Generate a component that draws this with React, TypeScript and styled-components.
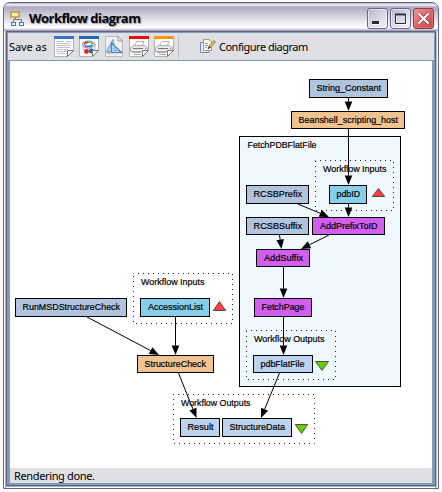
import React from "react";
import styled, { createGlobalStyle } from "styled-components";

const GlobalStyle = createGlobalStyle`
  * { box-sizing: border-box; }
  body { margin: 0; background: #fff; color: #000; }
`;

const Screen = styled.div`
  width: 442px;
  height: 492px;
  padding: 2px 3px 3px;
  background: #fff;
  overflow: hidden;
`;

const WindowFrame = styled.div`
  height: 487px;
  border: 1px solid #656484;
  border-radius: 7px 7px 0 0;
  display: flex;
  flex-direction: column;
  background: linear-gradient(to right, #fff 1px, #aaaabb 1px, #aaaabb 2px, transparent 2px),
    linear-gradient(to left, #fff 1px, #b9b8c9 1px, #b9b8c9 3px, transparent 3px),
    linear-gradient(to top, #fff 1px, #aaaabd 1px);
  padding: 0 2px 3px 2px;
  overflow: hidden;
`;

const TitleBar = styled.header`
  flex: 0 0 28px;
  margin: 0 -2px;
  padding: 5px 4px 2px 6px;
  display: flex;
  align-items: center;
  gap: 2px;
  background: linear-gradient(#aaa9c0 0, #d7d6e3 1px, #f4f3fa 2px, #aaa9be 4px, #b9b8ca 7px,
    #d2d1de 13px, #f1f1f5 21px, #ffffff 25px, #dddde5 26px, #8f8ea8 28px);
`;

const Title = styled.h1`
  margin: -2px 0 0 2px;
  flex: 1;
  font: bold 13px/18px "Open Sans", "Noto Sans", sans-serif;
  letter-spacing: -0.54px;
  white-space: nowrap;
  text-shadow: 1px 1px 1px #9998aa;
`;

const WindowButton = styled.button<{ $close?: boolean }>`
  width: 21px;
  height: 21px;
  padding: 0;
  display: grid;
  place-items: center;
  border: 1px solid ${(p) => (p.$close ? "#963843" : "#67668b")};
  border-radius: 3px;
  background: ${(p) =>
    p.$close
      ? "linear-gradient(135deg, #ef9a96, #df6b6b 45%, #c44750)"
      : "linear-gradient(145deg, #b7b6cb, #d8d7e4 50%, #f4f4f8)"};
  box-shadow: inset 0 0 0 1px ${(p) => (p.$close ? "#ed8e8a66" : "#ffffff88")};
`;

const Client = styled.main`
  flex: 1;
  display: flex;
  flex-direction: column;
  border: 1px solid #626181;
`;

const Bevel = styled.div`
  flex: 1;
  display: flex;
  flex-direction: column;
  border: solid #7e9db9;
  border-width: 1px 3px 2px;
`;

const Toolbar = styled.div`
  flex: 0 0 28px;
  display: flex;
  align-items: center;
  margin: 0 -2px;
  padding: 0 2px 0 1px;
  background: #e0dfe4;
  border-bottom: 1px solid #7e9db9;
`;

const UiText = styled.span<{ $width: number; $spacing: number }>`
  width: ${(p) => p.$width}px;
  font: 11px/15px "Noto Sans", "Open Sans", sans-serif;
  letter-spacing: ${(p) => p.$spacing}px;
  white-space: nowrap;
`;

const SaveButtons = styled.div`
  display: flex;
  gap: 5px;
  padding-right: 4px;
  border-right: 1px solid #c1c1c8;
  height: 22px;
  align-items: center;
`;

const ConfigureButton = styled.div`
  display: flex;
  align-items: center;
  gap: 3px;
  margin-left: 21px;
`;

const Glyph = styled.svg`
  display: block;
  flex: none;
`;

const Canvas = styled.section`
  flex: 1;
  background: #fff;
  overflow: hidden;
`;

const Diagram = styled.svg`
  display: block;
`;

const NodeBox = styled.rect`
  stroke: #000;
  stroke-width: 1;
`;

const GroupBox = styled.rect`
  fill: none;
  stroke: #222;
  stroke-width: 1;
  stroke-dasharray: 1 4;
  stroke-dashoffset: 0.5;
`;

const Label = styled.text`
  font: 9.4px "Liberation Sans", Arial, sans-serif;
  fill: #000;
  stroke: #000;
  stroke-width: 0.2px;
`;

const Edge = styled.path`
  fill: none;
  stroke: #000;
  stroke-width: 1;
`;

const StatusBar = styled.footer`
  flex: 0 0 14px;
  padding-left: 4px;
  display: flex;
  align-items: center;
  background: #e0dfe4;
`;

const palette = {
  constant: "#b0c4de",
  script: "#f0c390",
  input: "#87ceeb",
  local: "#d15fee",
  output: "#bcd2ee",
};

type Kind = keyof typeof palette;
interface GraphNode {
  name: string;
  kind: Kind;
  box: [number, number, number, number];
  text: [number, number];
}

const nodes: GraphNode[] = [
  { name: "String_Constant", kind: "constant", box: [309, 79, 79, 19], text: [316.5, 64.5] },
  { name: "Beanshell_scripting_host", kind: "script", box: [291, 111, 114, 18], text: [298.5, 99.5] },
  { name: "RCSBPrefix", kind: "constant", box: [246, 185, 63, 19], text: [253.5, 48.5] },
  { name: "pdbID", kind: "input", box: [329, 185, 38, 19], text: [336.5, 23.5] },
  { name: "RCSBSuffix", kind: "constant", box: [246, 217, 63, 18], text: [253.5, 48.5] },
  { name: "AddPrefixToID", kind: "local", box: [312, 217, 73, 18], text: [320, 57.5] },
  { name: "AddSuffix", kind: "local", box: [256, 249, 54, 18], text: [264, 39] },
  { name: "FetchPage", kind: "local", box: [254, 298, 58, 19], text: [261.5, 43] },
  { name: "pdbFlatFile", kind: "output", box: [253, 355, 60, 18], text: [260.5, 44] },
  { name: "RunMSDStructureCheck", kind: "constant", box: [15, 298, 112, 19], text: [22.5, 97.5] },
  { name: "AccessionList", kind: "input", box: [140, 298, 70, 19], text: [148, 55] },
  { name: "StructureCheck", kind: "script", box: [137, 355, 77, 18], text: [144.5, 61.5] },
  { name: "Result", kind: "output", box: [180, 418, 40, 19], text: [187.5, 26] },
  { name: "StructureData", kind: "output", box: [222, 418, 70, 19], text: [229.5, 55.5] },
];

const groups = [
  { name: "Workflow Inputs", box: [315, 160, 79, 51], x: 323, y: 172, width: 63.5 },
  { name: "Workflow Outputs", box: [246, 330, 90, 50], x: 254, y: 342, width: 70.5 },
  { name: "Workflow Inputs", box: [133, 273, 100, 51], x: 141, y: 285, width: 63.5 },
  { name: "Workflow Outputs", box: [173, 394, 142, 50], x: 181, y: 406, width: 69.5 },
];

/* Each edge runs from its source to the tip of its arrow head. */
const edges: [number, number, number, number][] = [
  [348.5, 98, 348.5, 111],
  [348.5, 129, 348.5, 185],
  [298, 204, 329, 217],
  [348.5, 204, 348.5, 217],
  [279.5, 235, 281.5, 249],
  [329, 235, 301, 249],
  [283.5, 267, 283.5, 298],
  [283.5, 317, 283.5, 355],
  [87, 317, 159, 355],
  [175.5, 317, 175.5, 355],
  [178.5, 373, 196.5, 418],
  [279.5, 373, 261, 418],
];

const Arrow = ({ line: [x1, y1, x2, y2] }: { line: [number, number, number, number] }) => {
  const angle = Math.atan2(y2 - y1, x2 - x1);
  const dx = Math.cos(angle);
  const dy = Math.sin(angle);
  const bx = x2 - dx * 9.5;
  const by = y2 - dy * 9.5;
  return (
    <>
      <Edge d={`M${x1} ${y1}L${bx} ${by}`} />
      <polygon points={`${x2},${y2} ${bx - dy * 3.8},${by + dx * 3.8} ${bx + dy * 3.8},${by - dx * 3.8}`} />
    </>
  );
};

const PageIcon = ({ stripe, children }: { stripe: string; children: React.ReactNode }) => (
  <Glyph width="20" height="21" viewBox="0 0 20 21">
    <path d="M.5.5H19.5V14L13.5 20.5H.5Z" fill="#fafafa" stroke="#b2b2b5" />
    <path d="M0 0H20V3H0Z" fill={stripe} />
    {children}
    <path d="M13.5 20.5V14.5H19.5Z" fill="#fff" stroke="#77777b" />
  </Glyph>
);

const PrinterArt = () => (
  <g>
    <path d="M5.5 9.5L8 5.5H15L13 10Z" fill="#fff" stroke="#b5b5b8" />
    <path d="M1.5 11.5L5 9.5H15L18.5 11.5V15.5H1.5Z" fill="#e9e9ea" stroke="#b0b0b2" />
    <path d="M4 12.5H14" stroke="#77777a" />
    <path d="M3 16.5H12M5 18.5H12" stroke="#a5a5aa" />
    <path d="M16 12.5H17" stroke="#d65252" />
  </g>
);

const SaveIcons = () => (
  <SaveButtons>
    <PageIcon stripe="#3f70ca">
      <path d="M2 5.5H10M12 5.5H17M3 7.5H15M2 9.5H17M3 11.5H16M2 13.5H9M10 13.5H14M2 15.5H13M3 17.5H11" stroke="#c2c2c7" />
    </PageIcon>
    <PageIcon stripe="#2266c4">
      <path d="M4 8v5c2 4 12 4 12 0V8" fill="#eee" stroke="#bbb" />
      <ellipse cx="9.5" cy="8.5" rx="6" ry="3.5" fill="#f5f5f5" stroke="#888" />
      <path d="M5.3 8.5Q5.5 6.5 9 6.3" stroke="#e0292b" strokeWidth="1.6" fill="none" />
      <path d="M9 6.3Q13.5 6.3 13.7 8.5" stroke="#51c653" strokeWidth="1.6" fill="none" />
      <path d="M5.5 9.5Q9 11.5 13.5 9.3" stroke="#2f77dd" strokeWidth="1.6" fill="none" />
      <circle cx="7.5" cy="15.5" r="2.4" fill="#e3292c" />
      <circle cx="12.3" cy="15" r="2.4" fill="#2361c8" />
      <path d="M14 16h4" stroke="#23a556" strokeWidth="2" />
    </PageIcon>
    <Glyph width="20" height="21" viewBox="0 0 20 21">
      <path d="M1.5.5H14L18.5 5V20.5H1.5Z" fill="#f0f0ef" stroke="#bbbbbd" />
      <path d="M14 .5V5H18.5Z" fill="#fff" stroke="#96969a" />
      <path d="M2 16L9 3.5L11.5 16Z" fill="#b5cdea" stroke="#6f9fd6" />
      <path d="M7.5 7L17.5 16.5H7.5Z" fill="#d4e2ef" stroke="#5289c8" strokeWidth="1.5" />
      <path d="M10 11.5L13 14.5H10Z" fill="#fff" stroke="#78a9d8" />
      <path d="M3 15H6V18H3Z" fill="#82b85f" opacity=".65" />
    </Glyph>
    <PageIcon stripe="#f20a0b"><PrinterArt /></PageIcon>
    <PageIcon stripe="#ff990b"><PrinterArt /></PageIcon>
  </SaveButtons>
);

const HierarchyIcon = () => (
  <Glyph width="15" height="16" viewBox="0 0 15 16">
    <path d="M5.5 6V9M3.5 12V8.5H11.5V12" fill="none" stroke="#777783" />
    <rect x="1" y="1" width="8" height="5" fill="#ffefb5" stroke="#c79a35" strokeWidth="1.6" />
    <rect x="1.5" y="11.5" width="4" height="3" fill="#eaf3ff" stroke="#4777ad" />
    <rect x="9.5" y="11.5" width="4" height="3" fill="#eaf3ff" stroke="#4777ad" />
  </Glyph>
);

const EditIcon = () => (
  <Glyph width="16" height="15" viewBox="0 0 16 15">
    <path d="M.5 3.5H4V11.5H9V13.5H.5Z" fill="#e7efff" stroke="#6c87bc" />
    <path d="M3.5.5H9L11.5 3V11.5H3.5Z" fill="#fff" stroke="#a69a74" />
    <path d="M5 4.5H8M5 6.5H8M5 8.5H7" stroke="#8a9cc7" />
    <path d="M8 10L9 7L14 1.5L15.5 3L10.5 8.5Z" fill="#efc05e" stroke="#8c672f" strokeWidth=".8" />
    <path d="M8 10L9 7L10.5 8.5Z" fill="#333" />
  </Glyph>
);

const WorkflowDiagram = () => (
  <Diagram width="422" height="407" viewBox="10 61 422 407">
    <NodeBox x="239.5" y="136.5" width="161" height="250" fill="#f0f8ff" />
    <Label x="247.5" y="148" textLength="69" lengthAdjust="spacingAndGlyphs">FetchPDBFlatFile</Label>
    {groups.map((g, i) => (
      <React.Fragment key={i}>
        <GroupBox x={g.box[0] + 0.5} y={g.box[1] + 0.5} width={g.box[2] - 1} height={g.box[3] - 1} />
        <Label x={g.x} y={g.y} textLength={g.width} lengthAdjust="spacingAndGlyphs">{g.name}</Label>
      </React.Fragment>
    ))}
    {edges.map((line, i) => <Arrow key={i} line={line} />)}
    {nodes.map(({ name, kind, box: [x, y, w, h], text: [tx, tw] }) => (
      <React.Fragment key={name}>
        <NodeBox x={x + 0.5} y={y + 0.5} width={w - 1} height={h - 1} fill={palette[kind]} />
        <Label x={tx} y={y + 12} textLength={tw} lengthAdjust="spacingAndGlyphs">{name}</Label>
      </React.Fragment>
    ))}
    <g fill="#ff4040" stroke="#333" strokeWidth=".8">
      <path d="M378.5 188.5L384.7 196.5H372.3Z" />
      <path d="M219.5 301.5L225.7 310.5H213.3Z" />
    </g>
    <g fill="#66cd00" stroke="#333" strokeWidth=".8">
      <path d="M315.5 361.5H328.5L322 370.5Z" />
      <path d="M295.3 424.5H307.7L301.5 433.5Z" />
    </g>
  </Diagram>
);

export default function App() {
  return (
    <>
      <GlobalStyle />
      <Screen>
        <WindowFrame>
          <TitleBar>
            <HierarchyIcon />
            <Title>Workflow diagram</Title>
            <WindowButton aria-label="Minimize">
              <Glyph width="19" height="19" viewBox="0 0 19 19">
                <path d="M4 12H11V15H4Z" fill="#28273d" />
                <path d="M4 15.5H11.5V12" fill="none" stroke="#fff" />
              </Glyph>
            </WindowButton>
            <WindowButton aria-label="Maximize">
              <Glyph width="19" height="19" viewBox="0 0 19 19">
                <path d="M5 6.5H15.5V15.5H5Z" fill="none" stroke="#fff" />
                <path d="M4.5 5.5H14.5V14.5H4.5Z" fill="none" stroke="#29283e" />
                <path d="M4 5.5H15" stroke="#29283e" strokeWidth="2" />
              </Glyph>
            </WindowButton>
            <WindowButton $close aria-label="Close">
              <Glyph width="19" height="19" viewBox="0 0 19 19">
                <path d="M4.5 4.5L14.5 14.5M14.5 4.5L4.5 14.5" stroke="#8d3540" strokeWidth="3.5" />
                <path d="M4.5 4.5L14.5 14.5M14.5 4.5L4.5 14.5" stroke="#fff" strokeWidth="2.2" />
              </Glyph>
            </WindowButton>
          </TitleBar>
          <Client>
            <Bevel>
              <Toolbar>
                <UiText $width={45} $spacing={-0.1}>Save as</UiText>
                <SaveIcons />
                <ConfigureButton>
                  <EditIcon />
                  <UiText $width={90} $spacing={-0.5}>Configure diagram</UiText>
                </ConfigureButton>
              </Toolbar>
              <Canvas><WorkflowDiagram /></Canvas>
              <StatusBar><UiText $width={100} $spacing={-0.36}>Rendering done.</UiText></StatusBar>
            </Bevel>
          </Client>
        </WindowFrame>
      </Screen>
    </>
  );
}
